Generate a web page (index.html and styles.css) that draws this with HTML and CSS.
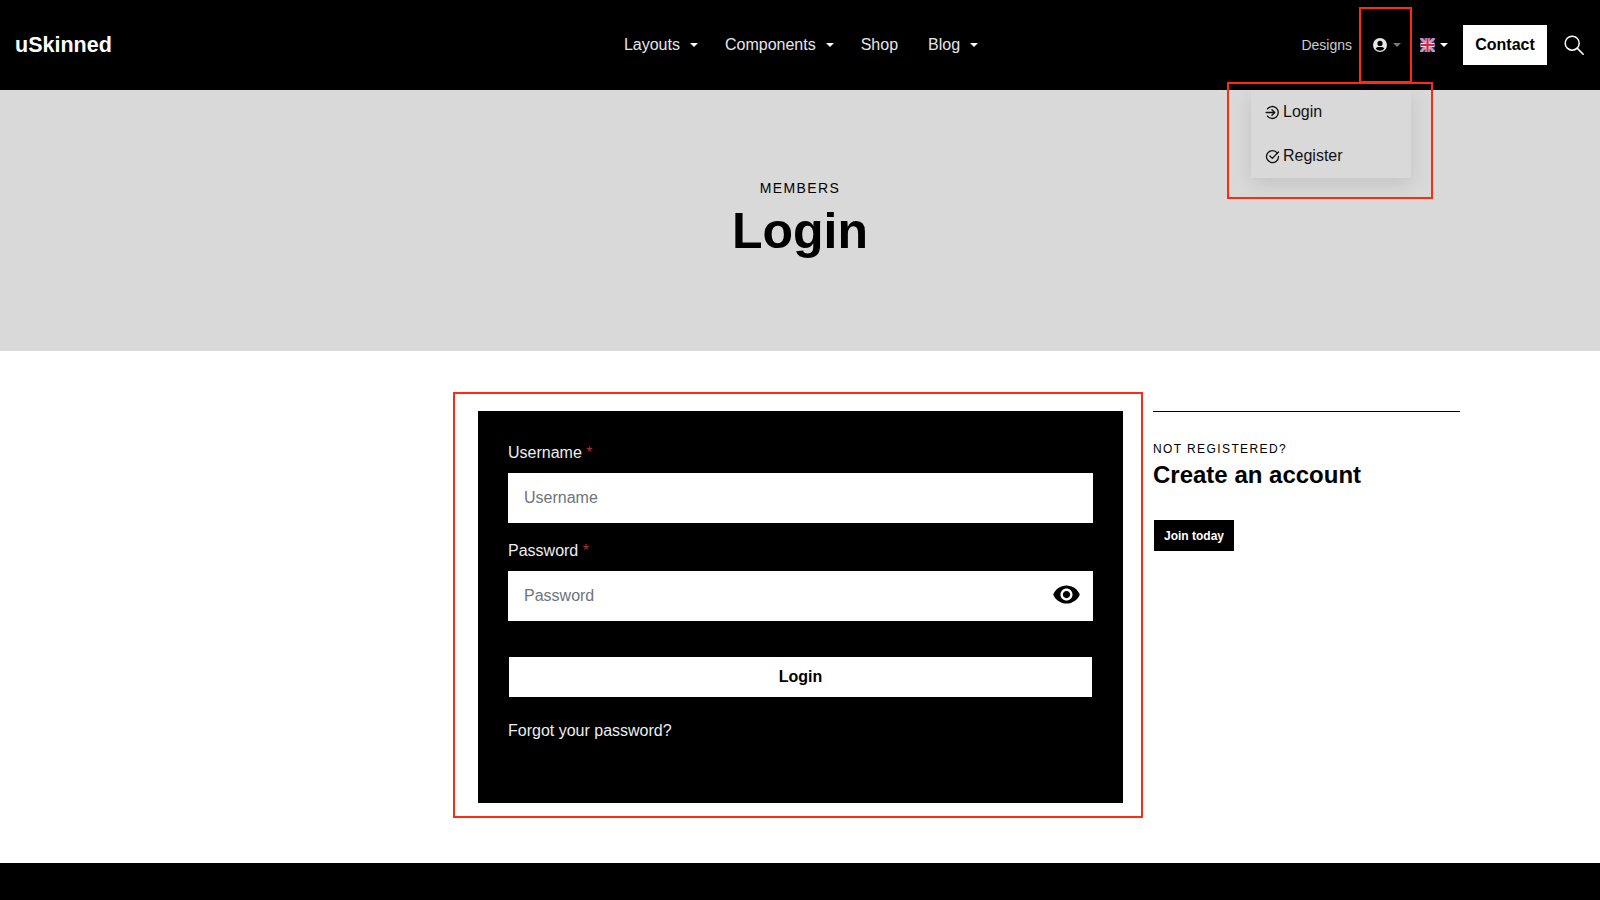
FILE: index.html
```html
<!DOCTYPE html>
<html lang="en">
<head>
    <meta charset="UTF-8">
    <meta name="viewport" content="width=device-width, initial-scale=1.0">
    <title>Login - uSkinned</title>
    <link rel="stylesheet" href="styles.css">
</head>
<body>

    <header class="site-header">
        <a class="logo" href="#">uSkinned</a>

        <nav class="main-nav">
            <a href="#" class="nav-item">Layouts <span class="caret"></span></a>
            <a href="#" class="nav-item">Components <span class="caret"></span></a>
            <a href="#" class="nav-item">Shop</a>
            <a href="#" class="nav-item">Blog <span class="caret"></span></a>
        </nav>

        <div class="header-tools">
            <a href="#" class="designs-link">Designs</a>
            <a href="#" class="tool-toggle member-toggle">
                <svg class="user-icon" viewBox="0 0 16 16" fill="#e6e6e6">
                    <path d="M8 1a7 7 0 1 0 0 14A7 7 0 0 0 8 1zm0 2.8a2.6 2.6 0 1 1 0 5.2 2.6 2.6 0 0 1 0-5.2zm0 9.9a5.6 5.6 0 0 1-4.3-2c.5-1 1.6-1.7 2.8-1.7h3c1.2 0 2.3.7 2.8 1.7a5.6 5.6 0 0 1-4.3 2z"/>
                </svg>
                <span class="caret caret-muted"></span>
            </a>
            <a href="#" class="tool-toggle lang-toggle">
                <svg class="flag-icon" viewBox="0 0 14 14">
                    <rect width="14" height="14" fill="#2a3f9e"/>
                    <path d="M0 0l14 14M14 0L0 14" stroke="#f0d8e0" stroke-width="2.2"/>
                    <path d="M0 0l14 14M14 0L0 14" stroke="#d8344f" stroke-width="0.9"/>
                    <path d="M7 0v14M0 7h14" stroke="#f5e6ea" stroke-width="3.8"/>
                    <path d="M7 0v14M0 7h14" stroke="#e0203c" stroke-width="2.2"/>
                </svg>
                <span class="caret"></span>
            </a>
            <a href="#" class="contact-btn">Contact</a>
            <a href="#" class="search-btn">
                <svg viewBox="0 0 20 20" fill="none" stroke="#fff" stroke-width="1.5" stroke-linecap="round">
                    <circle cx="8.2" cy="8.2" r="7"/>
                    <path d="M13.4 13.4l5.8 5.8"/>
                </svg>
            </a>
        </div>
    </header>

    <!-- dropdown is open in this state -->
    <div class="member-menu">
        <a href="#" class="member-link">
            <svg viewBox="0 0 16 16" fill="none" stroke="#111" stroke-width="1.4" stroke-linecap="round" stroke-linejoin="round">
                <path d="M2.6 4.2A6.4 6.4 0 1 1 2.6 11.8"/>
                <path d="M1.2 8h9M7.4 5l3 3-3 3"/>
            </svg>
            Login
        </a>
        <a href="#" class="member-link">
            <svg viewBox="0 0 16 16" fill="none" stroke="#111" stroke-width="1.4" stroke-linecap="round" stroke-linejoin="round">
                <path d="M13.2 4.4A6.4 6.4 0 1 0 14.4 8"/>
                <path d="M5.2 7.4l2.6 2.6 6.6-6.8"/>
            </svg>
            Register
        </a>
    </div>

    <section class="hero">
        <p class="hero-label">MEMBERS</p>
        <h1>Login</h1>
    </section>

    <main class="content">
        <form class="login-card">
            <label class="field-label" for="username">Username <span class="required">*</span></label>
            <input class="field-input" id="username" type="text" placeholder="Username">

            <label class="field-label" for="password">Password <span class="required">*</span></label>
            <div class="password-wrap">
                <input class="field-input" id="password" type="password" placeholder="Password">
                <svg class="eye-icon" viewBox="0 0 24 24" fill="#000">
                    <path d="M12 4.5C7 4.5 2.73 7.61 1 12c1.73 4.39 6 7.5 11 7.5s9.27-3.11 11-7.5c-1.73-4.39-6-7.5-11-7.5zM12 17c-2.76 0-5-2.24-5-5s2.24-5 5-5 5 2.24 5 5-2.24 5-5 5zm0-8c-1.66 0-3 1.34-3 3s1.34 3 3 3 3-1.34 3-3-1.34-3-3-3z"/>
                </svg>
            </div>

            <button class="login-btn" type="button">Login</button>
            <a href="#" class="forgot-link">Forgot your password?</a>
        </form>

        <aside class="sidebar">
            <p class="sidebar-label">NOT REGISTERED?</p>
            <h2>Create an account</h2>
            <a href="#" class="join-btn">Join today</a>
        </aside>
    </main>

    <footer class="site-footer"></footer>

    <!-- red annotation boxes drawn on top of the page -->
    <div class="mark mark-toggle"></div>
    <div class="mark mark-menu"></div>
    <div class="mark mark-form"></div>

</body>
</html>
```

FILE: styles.css
```css
body {
    font-family: "Liberation Sans", Arial, sans-serif;
    font-size: 16px;
    background-color: #fff;
    color: #000;
    margin: 0;
    padding: 0;
    height: 900px;
    overflow: hidden;
    display: flex;
    flex-direction: column;
    position: relative;
}

a {
    color: inherit;
    text-decoration: none;
}

.site-header {
    height: 90px;
    flex-shrink: 0;
    background: #000;
    color: #fff;
    display: grid;
    grid-template-columns: 1fr auto 1fr;
    align-items: center;
    padding: 0 16px 0 15px;
}

.logo {
    font-size: 21.5px;
    font-weight: 700;
}

.main-nav {
    display: flex;
    align-items: center;
    gap: 30px;
    color: #e6e6e6;
}

.nav-item {
    display: flex;
    align-items: center;
}

.caret {
    display: inline-block;
    width: 0;
    height: 0;
    margin: 0 -3px 0 10px;
    border-top: 4px solid #fff;
    border-left: 4px solid transparent;
    border-right: 4px solid transparent;
}

.caret-muted {
    border-top-color: #777;
    margin: 0 0 0 5px;
}

.header-tools {
    display: flex;
    align-items: center;
    justify-content: flex-end;
}

.designs-link {
    font-size: 14px;
    color: #ccc;
    margin-right: 20px;
}

.tool-toggle {
    display: flex;
    align-items: center;
}

.user-icon {
    width: 16px;
    height: 16px;
}

.lang-toggle {
    margin-left: 19px;
}

.flag-icon {
    width: 15px;
    height: 14px;
}

.lang-toggle .caret {
    margin: 0 0 0 5px;
}

.contact-btn {
    background: #fff;
    color: #000;
    font-weight: 700;
    height: 40px;
    width: 84px;
    margin-left: 15px;
    display: flex;
    align-items: center;
    justify-content: center;
}

.search-btn {
    display: flex;
    margin-left: 17px;
}

.search-btn svg {
    width: 20px;
    height: 20px;
}

.member-menu {
    position: absolute;
    top: 90px;
    left: 1251px;
    width: 160px;
    height: 88px;
    background: #d9d9d9;
    box-shadow: 0 6px 18px rgba(0, 0, 0, 0.1);
    color: #111;
    z-index: 5;
}

.member-link {
    height: 44px;
    padding-left: 14px;
    display: flex;
    align-items: center;
    gap: 3px;
}

.member-link svg {
    width: 15px;
    height: 15px;
}

.hero {
    height: 261px;
    flex-shrink: 0;
    background: #d9d9d9;
    text-align: center;
    padding-top: 88px;
    box-sizing: border-box;
}

.hero-label {
    margin: 0;
    font-size: 14px;
    letter-spacing: 1.4px;
    line-height: 20px;
}

h1 {
    margin: -1px 0 0;
    font-size: 50px;
    line-height: 68px;
    font-weight: 700;
}

.content {
    flex: 1;
    display: flex;
    gap: 30px;
    padding: 60px 0 0 478px;
}

.login-card {
    width: 645px;
    height: 392px;
    box-sizing: border-box;
    background: #000;
    color: #eee;
    padding: 29px 30px 30px;
    display: flex;
    flex-direction: column;
}

.field-label {
    line-height: 26px;
    margin-bottom: 7px;
}

.required {
    color: #a33;
}

.field-input {
    display: block;
    width: 100%;
    height: 50px;
    box-sizing: border-box;
    border: none;
    border-radius: 0;
    background: #fff;
    padding: 0 16px;
    font-family: inherit;
    font-size: 16px;
    margin-bottom: 15px;
}

.field-input::placeholder {
    color: #6c757d;
}

.password-wrap {
    position: relative;
}

.eye-icon {
    position: absolute;
    top: 9px;
    right: 12px;
    width: 29px;
    height: 29px;
}

.login-btn {
    margin: 21px 1px 0;
    height: 40px;
    border: none;
    background: #fff;
    color: #000;
    font-family: inherit;
    font-size: 16px;
    font-weight: 700;
}

.forgot-link {
    margin-top: 21px;
    line-height: 26px;
}

.sidebar {
    width: 307px;
    height: 180px;
    border-top: 1px solid #000;
}

.sidebar-label {
    margin: 29px 0 0;
    font-size: 12px;
    letter-spacing: 1.4px;
    line-height: 16px;
}

h2 {
    margin: 0;
    font-size: 24px;
    line-height: 36px;
    font-weight: 700;
}

.join-btn {
    display: flex;
    align-items: center;
    justify-content: center;
    width: 80px;
    height: 31px;
    margin: 27px 0 0 1px;
    background: #000;
    color: #fff;
    font-size: 12px;
    font-weight: 700;
}

.site-footer {
    height: 37px;
    flex-shrink: 0;
    background: #000;
}

.mark {
    position: absolute;
    box-sizing: border-box;
    border: 2px solid #ff2a10;
    z-index: 10;
}

.mark-toggle {
    left: 1359px;
    top: 7px;
    width: 53px;
    height: 76px;
}

.mark-menu {
    left: 1227px;
    top: 82px;
    width: 206px;
    height: 117px;
}

.mark-form {
    left: 453px;
    top: 392px;
    width: 690px;
    height: 426px;
}
```
